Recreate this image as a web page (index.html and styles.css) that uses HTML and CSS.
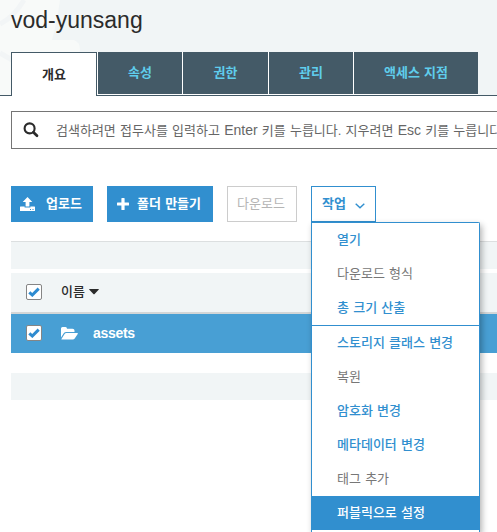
FILE: index.html
```html
<!DOCTYPE html>
<html lang="ko">
<head>
<meta charset="utf-8">
<title>vod-yunsang</title>
<link rel="stylesheet" href="styles.css">
</head>
<body>
<header class="header">
  <svg class="watermark" width="90" height="95" viewBox="0 0 90 95" aria-hidden="true">
    <path d="M0 0H60Q57 22 52 40H74Q80 42 80 50Q79 62 66 80L58 95H0Z" fill="#f8faf9"/>
    <path d="M0 53L50 82M0 24Q14 17 24 0" fill="none" stroke="#f2f5f6" stroke-width="5"/>
  </svg>
  <h1 class="title">vod-yunsang</h1>
  <nav class="tabs">
    <a class="tab tab-active">개요</a>
    <a class="tab">속성</a>
    <a class="tab">권한</a>
    <a class="tab">관리</a>
    <a class="tab tab-wide">액세스 지점</a>
  </nav>
</header>
<main class="content">
  <div class="search">
    <svg class="search-icon" width="16" height="16" viewBox="0 0 16 16"><circle cx="6.6" cy="6.4" r="5" fill="none" stroke="#2b2b2b" stroke-width="2.1"/><path d="M10.4 10.2L14 13.8" stroke="#2b2b2b" stroke-width="2.7" stroke-linecap="round"/></svg>
    <span class="search-text">검색하려면 접두사를 입력하고 <span class="latin">Enter</span> 키를 누릅니다. 지우려면 <span class="latin">Esc</span> 키를 누릅니다</span>
  </div>
  <div class="toolbar">
    <button class="btn btn-primary btn-upload">
      <svg width="15" height="15" viewBox="0 0 15 15" fill="#fff"><path d="M7.5 0L12.3 5H9.4V9.5H5.6V5H2.7Z"/><path fill-rule="evenodd" d="M0.5 9.5H4.6V10.5H10.4V9.5H14.5Q15 9.5 15 10V14H0V10Q0 9.500.5 9.500ZM10 12V13H11V12ZM12.500 12V13H13.500V12Z"/></svg>
      <span>업로드</span>
    </button>
    <button class="btn btn-primary btn-folder">
      <svg width="12" height="12" viewBox="0 0 12 12" fill="#fff"><path d="M4.400 0.500Q4.400 0 4.900 0H7.100Q7.600 0 7.600 0.500V4.400H11.500Q12 4.400 12 4.900V7.100Q12 7.600 11.500 7.600H7.600V11.500Q7.600 12 7.100 12H4.900Q4.400 12 4.400 11.500V7.600H0.500Q0 7.600 0 7.100V4.900Q0 4.400 0.500 4.400H4.400Z"/></svg>
      <span>폴더 만들기</span>
    </button>
    <button class="btn btn-disabled">다운로드</button>
    <div class="actions">
      <button class="btn btn-outline">
        <span>작업</span>
        <svg class="chevron" width="10" height="6" viewBox="0 0 10 6"><path d="M0.700 0.700L5 4.800L9.300 0.700" fill="none" stroke="#318fcf" stroke-width="1.400"/></svg>
      </button>
      <ul class="menu">
        <li class="item">열기</li>
        <li class="item item-off">다운로드 형식</li>
        <li class="item">총 크기 산출</li>
        <li class="separator"></li>
        <li class="item">스토리지 클래스 변경</li>
        <li class="item item-off">복원</li>
        <li class="item">암호화 변경</li>
        <li class="item">메타데이터 변경</li>
        <li class="item item-off">태그 추가</li>
        <li class="item item-selected">퍼블릭으로 설정</li>
        <li class="item item-off"></li>
      </ul>
    </div>
  </div>
  <section class="table">
    <div class="band band-top"></div>
    <div class="row row-head">
      <span class="check"><svg width="12" height="10" viewBox="0 0 12 10"><path d="M1.300 5.300L4.300 8L10.700 1.600" fill="none" stroke="#2e8bd0" stroke-width="3"/></svg></span>
      <span class="head-name">이름</span>
      <svg class="caret" width="10" height="6" viewBox="0 0 10 6"><path d="M0.300 0H9.700Q10 .4 9.600.8L5.400 5.200Q5 5.500 4.600 5.200L.4.800Q0 .4.300 0Z" fill="#2b2b2b"/></svg>
    </div>
    <div class="row row-selected">
      <span class="check"><svg width="12" height="10" viewBox="0 0 12 10"><path d="M1.300 5.300L4.300 8L10.700 1.600" fill="none" stroke="#2e8bd0" stroke-width="3"/></svg></span>
      <svg class="folder" width="17" height="13" viewBox="0 0 17 13" fill="#fff"><path d="M0 10.500V1.500Q0 0 1.500 0H4.500Q6 0 6 1.700H11.500Q13.500 1.700 13.500 3.500V5H5.200Q3.800 5 2.900 6Z"/><path d="M5.300 6H16.300Q17.200 6 16.700 6.900L13.700 11.500Q13 12.500 11.700 12.500H1Q0 12.500.6 11.700L3.600 7Q4.300 6 5.300 6Z"/></svg>
      <span class="name">assets</span>
    </div>
    <div class="band band-bottom"></div>
  </section>
</main>
</body>
</html>
```
FILE: styles.css
```css
* { box-sizing: border-box; }

body {
  margin: 0;
  height: 532px;
  overflow: hidden;
  background: #fff;
  color: #2b2b2b;
  font: 13px/20px "Liberation Sans", "Noto Sans CJK KR", sans-serif;
  word-spacing: .6px;
}

.header {
  position: relative;
  height: 96px;
  padding-left: 11px;
  background: #f1f5f6;
  border-bottom: 1px solid #445a67;
}

.watermark {
  position: absolute;
  left: 0;
  top: 0;
}

.title {
  position: relative;
  margin: 0;
  height: 52px;
  padding-top: 5px;
  font-size: 23px;
  line-height: 30px;
  font-weight: 400;
}

.tabs {
  position: relative;
  display: flex;
  width: 467px;
  height: 43px;
}

.tab {
  display: flex;
  align-items: center;
  justify-content: center;
  width: 86px;
  height: 43px;
  border-left: 1px solid #fff;
  border-bottom: 1px solid #fff;
  background: #445a67;
  color: #5fcdec;
  font-weight: 700;
  flex: none;
}

.tab:nth-child(2),
.tab:nth-child(4) { width: 85px; }

.tab-active {
  height: 44px;
  border: 1px solid #445a67;
  border-bottom: 0;
  background: #fff;
  color: #2b2b2b;
}

.tab-wide { width: 125px; }

.content { padding: 15px 0 0 11px; }

.search {
  display: flex;
  align-items: center;
  height: 38px;
  padding-left: 11px;
  overflow: hidden;
  border: 1px solid #757575;
  border-right: 0;
  color: #666;
  white-space: nowrap;
}

.search-icon { flex: none; margin-right: 17px; }
.latin { font-size: 14px; }

.toolbar {
  display: flex;
  gap: 14px;
  height: 36px;
  margin-top: 37px;
}

.btn {
  display: flex;
  align-items: center;
  height: 36px;
  margin: 0;
  padding: 0 10px;
  border: 1px solid #318fcf;
  background: #fff;
  font: inherit;
  word-spacing: inherit;
  white-space: nowrap;
}

.btn-primary {
  background: #318fcf;
  color: #fff;
  font-weight: 700;
}

.btn-upload { width: 82px; padding: 0 0 0 8px; gap: 11px; }
.btn-folder { width: 106px; padding: 0 0 0 9px; gap: 8px; }
.btn-disabled { width: 70px; border-color: #ccc; color: #b5b5b5; padding: 0 0 0 9px; }

.actions { position: relative; }

.btn-outline {
  width: 65px;
  gap: 9px;
  color: #318fcf;
  font-weight: 700;
}

.chevron { margin-top: 3px; }

.menu {
  position: absolute;
  z-index: 2;
  top: 36px;
  left: 0;
  width: 169px;
  height: 310px;
  overflow: hidden;
  margin: 0;
  padding: 0;
  list-style: none;
  border: 1px solid #318fcf;
  border-bottom: 0;
  border-radius: 0 2px 0 0;
  background: #fff;
  box-shadow: 2px 3px 6px rgba(0, 0, 0, .3);
}

.item {
  height: 34px;
  padding-left: 25px;
  line-height: 34px;
  color: #318fcf;
  font-weight: 500;
}

.item-off { color: #777; font-weight: 400; }
.item-selected { background: #318fcf; color: #fff; }
.separator { height: 1px; background: #318fcf; }

.table { margin-top: 19px; }
.band { background: #f1f5f6; }
.band-top { height: 28px; border-top: 1px solid #dcdfe0; }
.band-bottom { height: 27px; margin-top: 20px; }

.row {
  display: flex;
  align-items: center;
  padding: 0 0 1px 15px;
}

.row-head {
  height: 41px;
  margin-top: 4px;
  border-bottom: 2px solid #d3d6d7;
  background: #f1f5f6;
}

.row-selected {
  height: 39px;
  background: #489fd4;
  color: #fff;
}

.check {
  display: flex;
  align-items: center;
  justify-content: center;
  width: 16px;
  height: 16px;
  margin-right: 19px;
  border: 1px solid #858585;
  border-radius: 2px;
  background: #fff;
}

.head-name { font-weight: 500; }
.caret { margin-left: 4px; }
.folder { margin-right: 15px; }
.name { font-size: 14px; font-weight: 700; letter-spacing: -.3px; }
```
